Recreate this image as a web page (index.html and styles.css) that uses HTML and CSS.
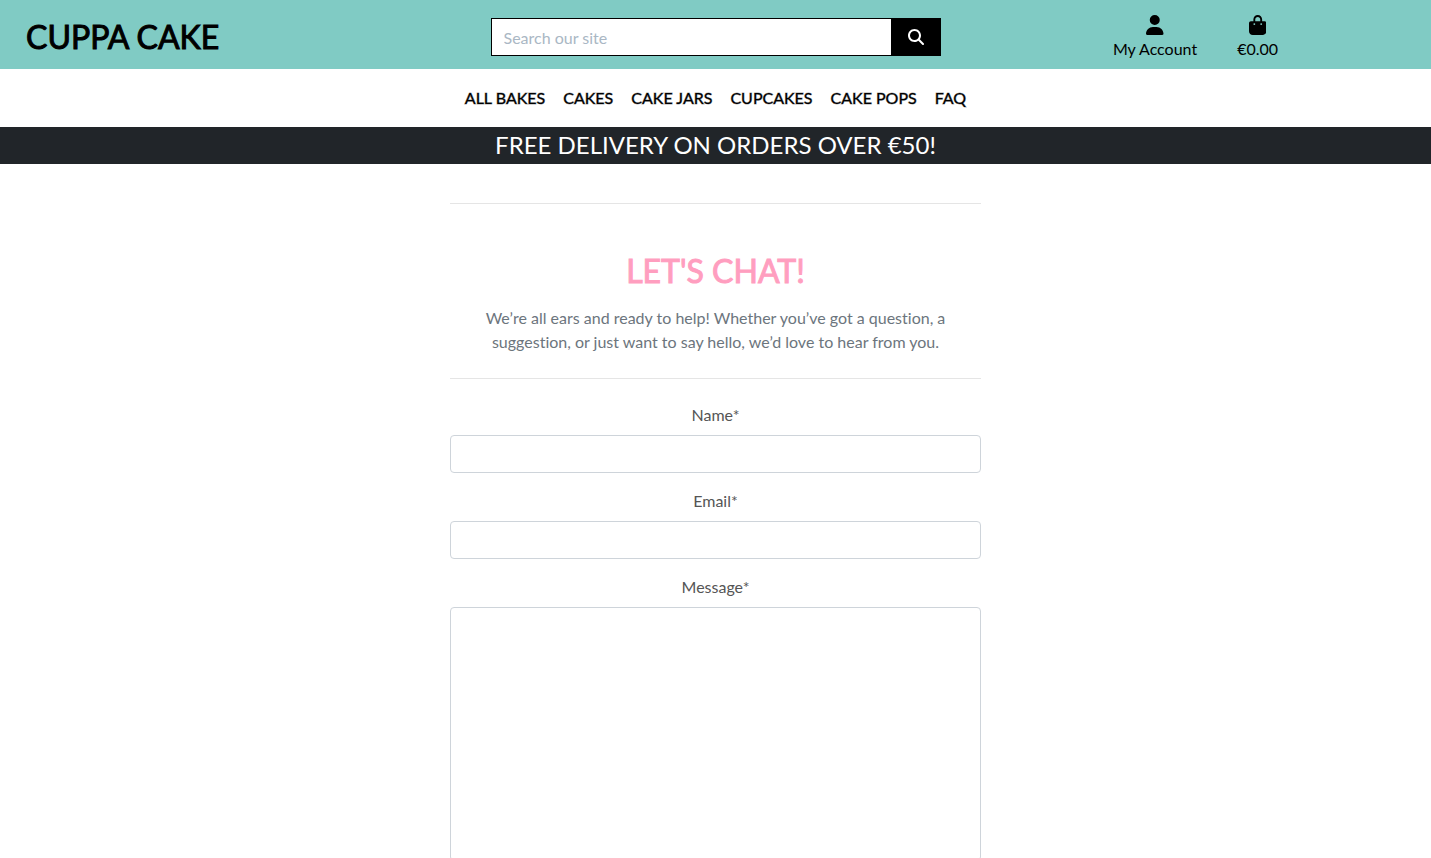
FILE: index.html
```html
<!DOCTYPE html>
<html lang="en">
<head>
<meta charset="utf-8">
<meta name="viewport" content="width=device-width, initial-scale=1">
<title>Cuppa Cake</title>
<link rel="stylesheet" href="styles.css">
</head>
<body>
<header class="topbar">
  <a class="brand" href="#">CUPPA CAKE</a>
  <form class="search" role="search">
    <input class="search-input" type="search" placeholder="Search our site" aria-label="Search our site">
    <button class="search-button" type="submit" aria-label="Search">
      <svg class="search-icon" viewBox="0 0 512 512" aria-hidden="true"><path d="M416 208c0 45.900-14.900 88.300-40 122.700L502.600 457.400c12.500 12.500 12.500 32.800 0 45.300s-32.800 12.500-45.300 0L330.700 376c-34.400 25.200-76.800 40-122.700 40C93.100 416 0 322.900 0 208S93.100 0 208 0S416 93.100 416 208zM208 352a144 144 0 1 0 0-288 144 144 0 1 0 0 288z"/></svg>
    </button>
  </form>
  <nav class="account" aria-label="Account">
    <a class="account-link" href="#">
      <svg class="account-icon" viewBox="0 0 448 512" aria-hidden="true"><path d="M224 256A128 128 0 1 0 224 0a128 128 0 1 0 0 256zm-45.700 48C79.800 304 0 383.800 0 482.300C0 498.700 13.300 512 29.700 512H418.300c16.400 0 29.700-13.300 29.700-29.700C448 383.800 368.200 304 269.700 304H178.300z"/></svg>
      <span>My Account</span>
    </a>
    <a class="account-link" href="#">
      <svg class="account-icon" viewBox="0 0 448 512" aria-hidden="true"><path d="M160 112c0-35.300 28.700-64 64-64s64 28.700 64 64v48H160V112zm-48 48H48c-26.500 0-48 21.500-48 48V416c0 53 43 96 96 96H352c53 0 96-43 96-96V208c0-26.500-21.500-48-48-48H336V112C336 50.100 285.900 0 224 0S112 50.100 112 112v48zm24 48a24 24 0 1 1 0 48 24 24 0 1 1 0-48zm152 24a24 24 0 1 1 48 0 24 24 0 1 1 -48 0z"/></svg>
      <span>€0.00</span>
    </a>
  </nav>
</header>
<nav class="menu" aria-label="Main">
  <a class="menu-link" href="#">ALL BAKES</a>
  <a class="menu-link" href="#">CAKES</a>
  <a class="menu-link" href="#">CAKE JARS</a>
  <a class="menu-link" href="#">CUPCAKES</a>
  <a class="menu-link" href="#">CAKE POPS</a>
  <a class="menu-link" href="#">FAQ</a>
</nav>
<p class="banner">FREE DELIVERY ON ORDERS OVER €50!</p>
<main class="contact">
  <hr class="rule">
  <h1 class="title">LET'S CHAT!</h1>
  <p class="intro">We’re all ears and ready to help! Whether you’ve got a question, a suggestion, or just want to say hello, we’d love to hear from you.</p>
  <hr class="rule">
  <form class="form">
    <div class="field">
      <label for="name">Name*</label>
      <input class="control" id="name" type="text" required>
    </div>
    <div class="field">
      <label for="email">Email*</label>
      <input class="control" id="email" type="email" required>
    </div>
    <div class="field">
      <label for="message">Message*</label>
      <textarea class="control" id="message" rows="10" required></textarea>
    </div>
  </form>
</main>
</body>
</html>
```
FILE: styles.css
```css
*, *::before, *::after { box-sizing: border-box; }

body {
  margin: 0;
  font-family: Lato, "Liberation Sans", sans-serif;
  font-size: 16px;
  font-variant-ligatures: none;
  line-height: 24px;
  color: #555;
  background: #fff;
}

a { color: #000; text-decoration: none; }

.topbar {
  display: grid;
  grid-template-columns: repeat(3, 1fr);
  align-items: center;
  padding: 8px 0;
  background: #80cbc4;
}

.brand {
  padding: 5px 0 0 26px;
  font-size: 32px;
  line-height: 48px;
  -webkit-text-stroke: 1px currentColor;
}

.search {
  display: flex;
  justify-self: center;
  width: 100%;
  max-width: 450px;
  padding-top: 4px;
}

.search-input {
  flex: 1;
  min-width: 0;
  height: 38px;
  padding: 7px 12px 5px;
  border: 1px solid #000;
  border-right: 0;
  border-radius: 0;
  appearance: none;
  font: inherit;
  color: #555;
  background: #fff;
}

.search-input::placeholder { color: #aab7c4; opacity: 1; }

.search-button {
  display: flex;
  align-items: center;
  justify-content: center;
  width: 50px;
  padding: 0;
  border: 0;
  background: #000;
}

.search-icon { width: 16px; height: 16px; fill: #fff; }

.account {
  display: flex;
  justify-content: center;
  gap: 40px;
  padding-left: 6px;
}

.account-link {
  display: flex;
  flex-direction: column;
  align-items: center;
  padding-top: 7px;
}

.account-icon { height: 20px; margin-bottom: 2px; }

.menu {
  display: flex;
  flex-wrap: wrap;
  justify-content: center;
  gap: 0 18px;
  padding: 17px 0;
}

.menu-link { -webkit-text-stroke: 1px rgb(0 0 0 / 40%); }

.banner {
  margin: 0;
  padding: 3px 0 5px;
  font-size: 24px;
  line-height: 29px;
  text-align: center;
  color: #fff;
  background: #212529;
}

.contact {
  max-width: 531px;
  margin: 0 auto;
  padding-top: 39px;
  text-align: center;
}

.rule {
  margin: 0;
  border: 0;
  border-top: 1px solid #e5e5e5;
}

.title {
  margin: 47px 0 15px;
  font-size: 32px;
  font-weight: 400;
  line-height: 40px;
  color: #ff9ebf;
  -webkit-text-stroke: 1px currentColor;
}

.intro {
  margin: 0;
  padding: 0 24px 24px;
  color: #6c757d;
}

.form { padding-top: 24px; }

.field { margin-bottom: 16px; }

.field label { display: block; margin-bottom: 8px; }

.control {
  display: block;
  width: 100%;
  padding: 6px 12px;
  border: 1px solid #ced4da;
  border-radius: 4px;
  font: inherit;
  color: #495057;
  background: #fff;
  resize: none;
}
```
